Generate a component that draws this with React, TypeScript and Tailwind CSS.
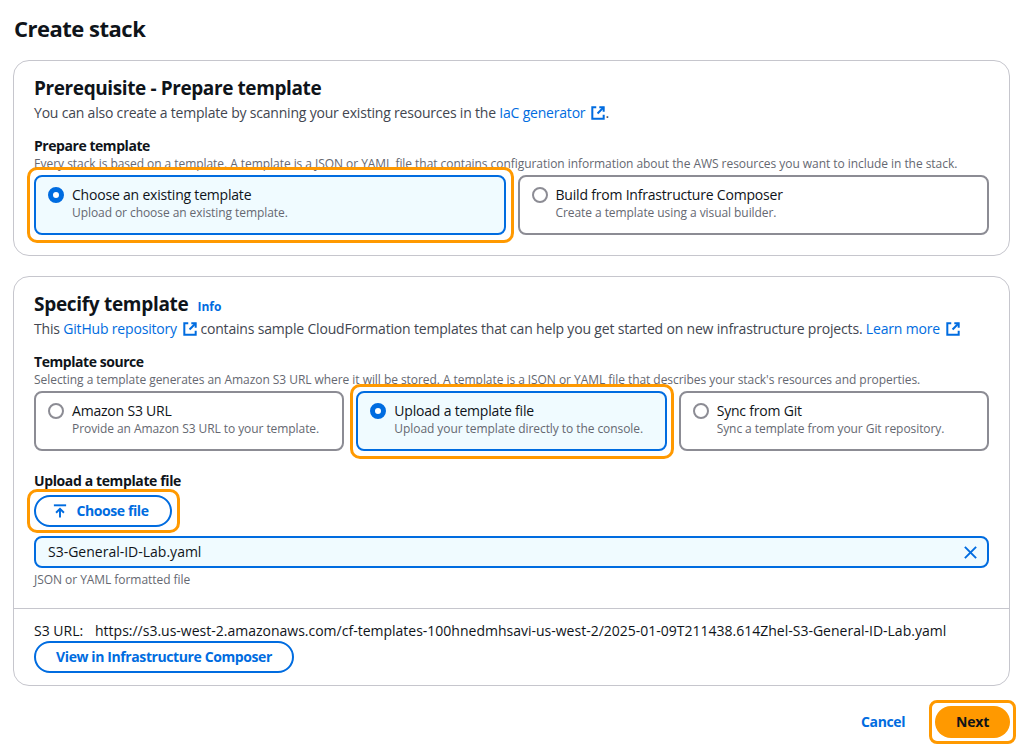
import { type FC, type ReactNode } from "react";

const ExternalIcon: FC = () => (
  <svg viewBox="0 0 16 16" fill="none" stroke="#006ce0" strokeWidth="2.3" className="inline-block w-[14px] h-[14px] ml-[6px] align-[-2px]">
    <path d="M6 1.5H1.5v13h13V10" />
    <path d="M9.5 1.5h5v5" />
    <path d="M14.5 1.5 7.5 8.5" />
  </svg>
);

const Highlight: FC<{ className: string }> = ({ className }) => (
  <div className={`absolute border-[3px] border-[#ff9900] pointer-events-none ${className}`} />
);

type TileProps = {
  title: string;
  description: string;
  selected?: boolean;
  highlight?: string;
};

const Tile: FC<TileProps> = ({ title, description, selected, highlight }) => (
  <div className="relative flex-1 min-w-0">
    <div
      className={`h-[60px] rounded-lg border-2 pl-[12px] pt-[8px] flex gap-[8px] ${
        selected ? "border-[#006ce0] bg-[#f0fbff]" : "border-[#8c8c94] bg-white"
      }`}
    >
      <div className="pt-[2px]">
        {selected ? (
          <div className="w-4 h-4 rounded-full border-[5px] border-[#006ce0] bg-white" />
        ) : (
          <div className="w-4 h-4 rounded-full border-2 border-[#8c8c94] bg-white" />
        )}
      </div>
      <div>
        <div className="text-sm leading-[20px] tracking-[-0.2px] text-[#0f141a]">{title}</div>
        <div className="text-xs leading-[16px] tracking-[-0.07px] text-[#656871]">{description}</div>
      </div>
    </div>
    {highlight && <Highlight className={highlight} />}
  </div>
);

const Card: FC<{ children: ReactNode }> = ({ children }) => (
  <div className="ml-[13px] mr-[10px] rounded-2xl border border-[#c6c6cd] bg-white">{children}</div>
);

const PillButton: FC<{ children: ReactNode; className: string }> = ({ children, className }) => (
  <button className={`h-8 rounded-full border-2 border-[#006ce0] bg-white text-sm font-bold tracking-[-0.4px] text-[#006ce0] flex items-center justify-center ${className}`}>
    {children}
  </button>
);

export default function App() {
  return (
    <div className="relative w-[1020px] h-[747px] overflow-hidden bg-white text-[#0f141a] font-['Open_Sans',sans-serif]">
      <h1 className="pl-[14px] pt-[12px] h-[60px] text-[22px] leading-[32px] font-bold tracking-[-0.5px]">Create stack</h1>

      <Card>
        <div className="pl-[20px] pr-[20px] h-[194px] pt-[14px]">
          <h2 className="text-[19px] leading-[26px] font-bold tracking-[-0.4px]">Prerequisite - Prepare template</h2>
          <p className="text-sm leading-[20px] mt-[2px] tracking-[-0.2px] text-[#424650]">
            You can also create a template by scanning your existing resources in the{" "}
            <span className="text-[#006ce0]">IaC generator</span>
            <ExternalIcon />.
          </p>
          <div className="mt-[13px] text-sm leading-[20px] font-bold tracking-[-0.45px]">Prepare template</div>
          <div className="text-xs leading-[16px] tracking-[-0.05px] text-[#656871]">
            Every stack is based on a template. A template is a JSON or YAML file that contains configuration information about the AWS resources you want to include in the stack.
          </div>
          <div className="flex gap-[12px] mt-[3px]">
            <Tile
              title="Choose an existing template"
              description="Upload or choose an existing template."
              selected
              highlight="-left-[7px] -right-[8px] -top-[8px] -bottom-[8px] rounded-[10px]"
            />
            <Tile title="Build from Infrastructure Composer" description="Create a template using a visual builder." />
          </div>
        </div>
      </Card>

      <div className="h-[20px]" />

      <Card>
        <div className="pl-[20px] pr-[20px] h-[331px] pt-[14px]">
          <h2 className="text-[19px] leading-[26px] font-bold tracking-[-0.3px] flex items-baseline gap-[9px]">
            Specify template
            <span className="text-xs font-bold tracking-normal text-[#006ce0]">Info</span>
          </h2>
          <p className="text-sm leading-[20px] mt-[2px] tracking-[-0.18px] text-[#424650] whitespace-nowrap">
            This <span className="text-[#006ce0]">GitHub repository</span>
            <ExternalIcon /> contains sample CloudFormation templates that can help you get started on new infrastructure projects.{" "}
            <span className="text-[#006ce0]">Learn more</span>
            <ExternalIcon />
          </p>
          <div className="mt-[13px] text-sm leading-[20px] font-bold tracking-[-0.45px]">Template source</div>
          <div className="text-xs leading-[16px] tracking-[-0.05px] text-[#656871]">
            Selecting a template generates an Amazon S3 URL where it will be stored. A template is a JSON or YAML file that describes your stack's resources and properties.
          </div>
          <div className="flex gap-[12px] mt-[3px]">
            <Tile title="Amazon S3 URL" description="Provide an Amazon S3 URL to your template." />
            <Tile
              title="Upload a template file"
              description="Upload your template directly to the console."
              selected
              highlight="-left-[6px] -right-[7px] -top-[7px] -bottom-[8px] rounded-[10px]"
            />
            <Tile title="Sync from Git" description="Sync a template from your Git repository." />
          </div>
          <div className="mt-[20px] text-sm leading-[20px] font-bold tracking-[-0.38px]">Upload a template file</div>
          <div className="relative w-[138px] mt-[4px]">
            <PillButton className="w-full gap-[9px] pr-[4px]">
              <svg viewBox="0 0 16 16" fill="none" stroke="#006ce0" strokeWidth="2.2" className="w-[14px] h-[14px]">
                <path d="M1 1.5h14" />
                <path d="M8 15.5V5.5" />
                <path d="M3.5 10 8 5.5l4.5 4.5" />
              </svg>
              Choose file
            </PillButton>
            <Highlight className="-left-[7px] -right-[8px] -inset-y-[6px] rounded-[10px]" />
          </div>
          <div className="mt-[9px] h-8 rounded-lg border-2 border-[#006ce0] bg-[#f0fbff] pl-[12px] pr-[8px] flex items-center justify-between text-sm">
            S3-General-ID-Lab.yaml
            <svg viewBox="0 0 16 16" fill="none" stroke="#006ce0" strokeWidth="2" className="w-[15px] h-[15px] mr-[1px]">
              <path d="M2 2l12 12" />
              <path d="M14 2 2 14" />
            </svg>
          </div>
          <div className="mt-[4px] text-xs leading-[16px] tracking-[-0.05px] text-[#656871]">JSON or YAML formatted file</div>
        </div>
        <div className="border-t border-[#c6c6cd] h-[77px] pl-[20px] pt-[12px]">
          <div className="flex text-sm leading-[20px] h-[20px] whitespace-nowrap">
            <span className="w-[61px]">S3 URL:</span>
            <span>https://s3.us-west-2.amazonaws.com/cf-templates-100hnedmhsavi-us-west-2/2025-01-09T211438.614Zhel-S3-General-ID-Lab.yaml</span>
          </div>
          <PillButton className="w-[260px]">View in Infrastructure Composer</PillButton>
        </div>
      </Card>

      <div className="flex items-center justify-end mt-[20px] pr-[10px]">
        <span className="text-sm font-bold tracking-[-0.4px] text-[#006ce0] mr-[30px]">Cancel</span>
        <div className="relative">
          <button className="w-[75px] h-8 rounded-full bg-[#ff9900] text-sm font-bold tracking-[-0.2px] text-[#0f141a]">Next</button>
          <Highlight className="-inset-x-[6px] -inset-y-[6px] rounded-[8px]" />
        </div>
      </div>
    </div>
  );
}
